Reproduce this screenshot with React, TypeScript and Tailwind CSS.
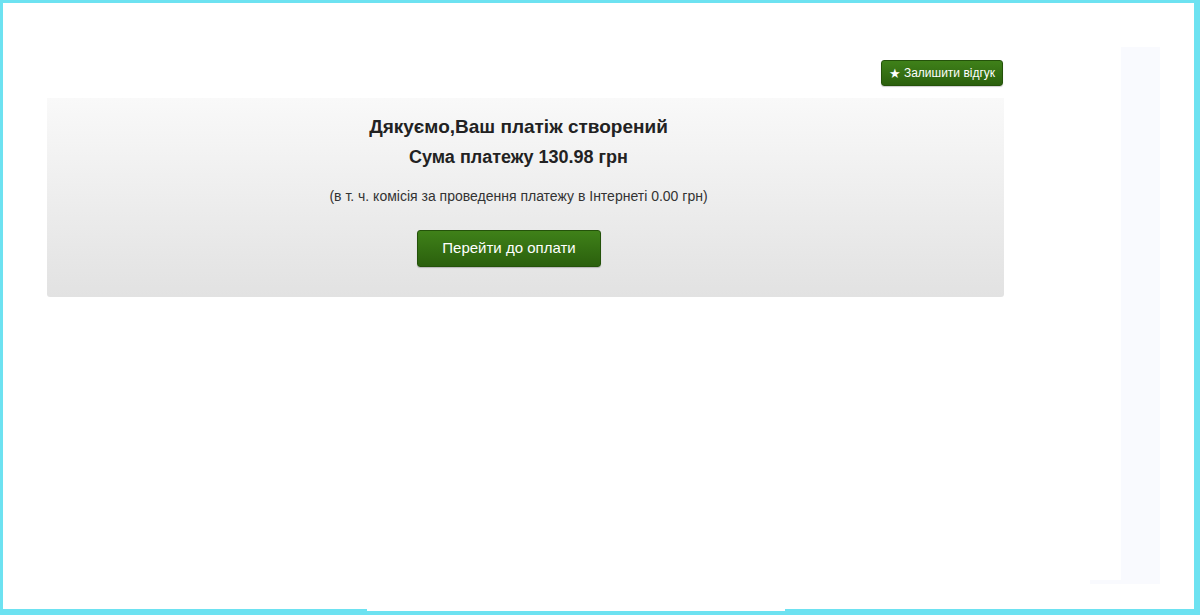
import React from "react";

export default function App() {
  return (
    <div className="w-[1200px] h-[615px] bg-[#6de2f1] pt-[3px] pl-[3px] overflow-hidden" style={{ fontFamily: '"Liberation Sans", Arial, sans-serif' }}>
      <div className="w-[1191px] h-[606px] bg-white flex flex-row">
        <div className="ml-[44px] w-[957px] flex flex-col">
          <div className="mt-[57px] flex justify-end pr-[1px]">
            <button className="h-[26px] w-[122px] rounded-[3px] border border-[#24520a] bg-gradient-to-b from-[#3f8119] to-[#2b600d] text-white text-[12px] flex items-center justify-center gap-[3px] shadow-[0_1px_1px_rgba(0,0,0,0.2)]">
              <span className="text-[13px] leading-none">★</span>
              <span>Залишити відгук</span>
            </button>
          </div>
          <div className="mt-[12px] h-[199px] rounded-b-[3px] bg-gradient-to-b from-[#f9f9f9] to-[#e2e2e2] flex flex-col">
            <div className="pr-[14px] flex flex-col items-center text-[#222]">
              <div className="mt-[18px] text-[19px] font-bold leading-[22px]">Дякуємо,Ваш платіж створений</div>
              <div className="mt-[8px] text-[18px] font-bold leading-[22px]">Сума платежу 130.98 грн</div>
              <div className="mt-[19px] text-[14px] leading-[18px] text-[#333]">(в т. ч. комісія за проведення платежу в Інтернеті 0.00 грн)</div>
            </div>
            <div className="mt-[25px] ml-[370px]">
              <button className="h-[37px] w-[184px] rounded-[3px] border border-[#24520a] bg-gradient-to-b from-[#3f8119] to-[#2b600d] text-white text-[15px] shadow-[0_1px_1px_rgba(0,0,0,0.2)]">
                Перейти до оплати
              </button>
            </div>
          </div>
        </div>
        <div className="ml-[86px] mt-[44px] w-[70px] flex flex-col">
          <div className="ml-auto w-[39px] h-[533px] bg-[#f9fafe]" />
          <div className="w-[70px] h-[4px] bg-[#f9fafe]" />
        </div>
      </div>
      <div className="ml-[364px] w-[418px] h-[2px] bg-white" />
    </div>
  );
}
